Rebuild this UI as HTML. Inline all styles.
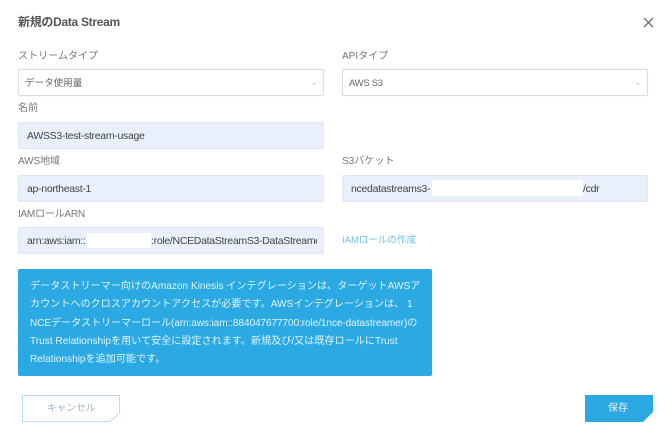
<!DOCTYPE html>
<html><head><meta charset="utf-8">
<style>
html,body{margin:0;padding:0;background:#fff}
body{width:672px;height:439px;overflow:hidden;position:relative;font-family:"Liberation Sans","Noto Sans CJK JP",sans-serif}
#w{position:absolute;left:0;top:0;width:672px;height:439px;filter:blur(.3px)}
.t{position:absolute;white-space:nowrap;line-height:14px}
.l{font-size:10.1px;color:#777;letter-spacing:-.05px}
.b{position:absolute;box-sizing:border-box;height:27px;border-radius:2px}
.s{background:#fff;border:1px solid #dcdcdc;box-shadow:0 0 1px #ddd}
.i{background:#e9f0fc;border:1px solid #dfe7f3}
.v{font-size:10.5px;color:#444;letter-spacing:-.3px}
.m{position:absolute;background:#fff}
.a{position:absolute;width:0;height:0;border-left:2px solid transparent;border-right:2px solid transparent;border-top:2px solid #ccc}
.n{position:absolute;left:30px;font-size:10.1px;color:#e3f4fc;white-space:nowrap;line-height:14px}
</style></head><body><div id="w">
<div class="t" style="left:18px;top:15px;font-size:12px;font-weight:bold;color:#555;letter-spacing:-.3px">新規のData Stream</div>
<svg style="position:absolute;left:643px;top:17px" width="11" height="11"><path d="M1 1L10 10M10 1L1 10" stroke="#777" stroke-width="1.5" fill="none"/></svg>

<div class="t l" style="left:18px;top:50px">ストリームタイプ</div>
<div class="t l" style="left:342px;top:50px">APIタイプ</div>
<div class="b s" style="left:18px;top:69px;width:306px"></div>
<div class="b s" style="left:342px;top:69px;width:306px"></div>
<div class="t l" style="left:25px;top:77px;color:#666;font-size:9.6px">データ使用量</div>
<div class="t l" style="left:349px;top:77px;color:#666;font-size:9.5px;letter-spacing:-.3px">AWS S3</div>
<div class="a" style="left:312px;top:83px"></div>
<div class="a" style="left:636px;top:83px"></div>

<div class="t l" style="left:18px;top:102px">名前</div>
<div class="b i" style="left:18px;top:122px;width:306px"></div>
<div class="t v" style="left:27px;top:129px">AWSS3-test-stream-usage</div>

<div class="t l" style="left:18px;top:155px;letter-spacing:-.2px">AWS地域</div>
<div class="t l" style="left:342px;top:155px">S3バケット</div>
<div class="b i" style="left:18px;top:175px;width:306px"></div>
<div class="b i" style="left:342px;top:175px;width:306px"></div>
<div class="t v" style="left:27px;top:182px">ap-northeast-1</div>
<div class="t v" style="left:351px;top:182px">ncedatastreams3-</div>
<div class="m" style="left:432px;top:180px;width:151px;height:16px"></div>
<div class="t v" style="left:583px;top:182px">/cdr</div>

<div class="t l" style="left:18px;top:208px;letter-spacing:-.3px">IAMロールARN</div>
<div class="b i" style="left:18px;top:227px;width:306px"></div>
<div class="t v" style="left:27px;top:234px">arn:aws:iam::</div>
<div class="m" style="left:87px;top:233px;width:64px;height:15px"></div>
<div class="t v" style="left:151px;top:234px;width:166px;overflow:hidden">:role/NCEDataStreamS3-DataStreamer</div>
<div class="t" style="left:342px;top:233px;font-size:9.5px;color:#6dbfe8;line-height:15px">IAMロールの作成</div>

<div style="position:absolute;left:18px;top:269px;width:414px;height:107px;background:#2aa9e2;border-radius:2px"></div>
<div class="n" style="top:280px">データストリーマー向けのAmazon Kinesis インテグレーションは、ターゲットAWSア</div>
<div class="n" style="top:298px">カウントへのクロスアカウントアクセスが必要です。AWSインテグレーションは、 1</div>
<div class="n" style="top:317px;letter-spacing:-.1px">NCEデータストリーマーロール(arn:aws:iam::884047677700:role/1nce-datastreamer)の</div>
<div class="n" style="top:335px">Trust Relationshipを用いて安全に設定されます。新規及び/又は既存ロールにTrust</div>
<div class="n" style="top:353px">Relationshipを追加可能です。</div>

<svg style="position:absolute;left:22px;top:395px" width="99" height="28"><path d="M.5 .5H97.5V18L88 26.5H.5Z" fill="#fff" stroke="#b5e0f5"/></svg>
<div class="t" style="left:47px;top:402px;font-size:9.7px;color:#9cb8c8">キャンセル</div>
<svg style="position:absolute;left:585px;top:395px" width="68" height="27"><path d="M0 0H68V17L58 27H0Z" fill="#2aa9e2"/></svg>
<div class="t" style="left:608px;top:402px;font-size:10px;color:#e3f4fc">保存</div>
</div></body></html>
